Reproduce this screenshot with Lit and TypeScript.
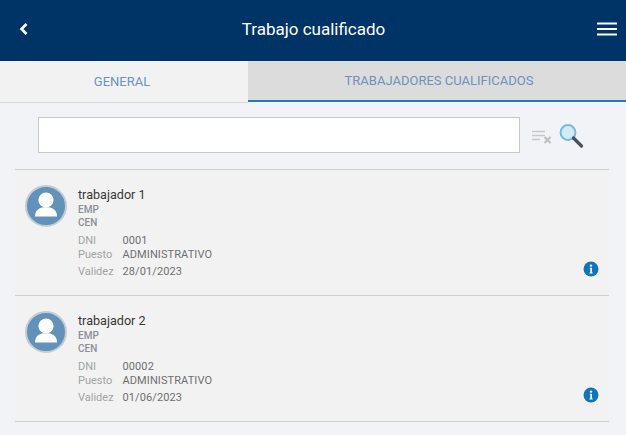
import { LitElement, html, css, svg } from "lit";
import { customElement } from "lit/decorators.js";

const workers = [
  { name: "trabajador 1", dni: "0001", puesto: "ADMINISTRATIVO", validez: "28/01/2023" },
  { name: "trabajador 2", dni: "00002", puesto: "ADMINISTRATIVO", validez: "01/06/2023" },
];

@customElement("app-root")
export class AppRoot extends LitElement {
  static styles = css`
    :host { display: block; height: 435px; overflow: hidden; background: #f1f3f7; font-family: Roboto, "Liberation Sans", sans-serif; }
    .top { height: 61px; background: #003366; display: flex; align-items: center; justify-content: space-between; padding: 0 9px 3px 18px; box-sizing: border-box; color: #fff; }
    .top h1 { margin: 0; font-size: 17px; font-weight: 400; color: #fff; }
    .top svg { display: block; }
    .tabs { display: flex; height: 42px; box-sizing: border-box; }
    .tab { display: flex; align-items: center; justify-content: center; font-size: 13px; color: #6d93b8; box-sizing: border-box; padding-bottom: 1px; }
    .tab.a { width: 248px; background: #f2f2f2; border-bottom: 1px solid #d8d8d8; padding-right: 4px; }
    .tab.b { flex: 1; background: #dcdcdc; border-bottom: 2px solid #2478c0; height: 41px; padding: 0 0 0 4px; }
    .search { display: flex; align-items: flex-start; padding: 14px 0 0 38px; height: 66px; box-sizing: border-box; }
    .input { width: 482px; height: 36px; box-sizing: border-box; border: 1px solid #c9c9c9; background: #fff; }
    .clear { margin: 13px 0 0 12px; }
    .lens { margin: 6px 0 0 5px; }
    .list { margin: 0 17px 0 15px; }
    .card { height: 126px; box-sizing: border-box; border-top: 1px solid #cfcfcf; background: #f2f2f2; display: flex; padding: 15px 10px 0 10px; }
    .card.end { height: 1px; padding: 0; }
    .avatar { width: 42px; height: 42px; flex: none; box-sizing: border-box; border: 2px solid #c3ccd4; border-radius: 50%; background: #6292b9; overflow: hidden; }
    .info { margin-left: 11px; flex: 1; }
    .name { font-size: 12.600px; line-height: 18px; color: #383838; margin-top: 1px; }
    .org { font-size: 10px; font-weight: 500; line-height: 13px; color: #8b9096; }
    .org.first { margin-top: -1px; }
    .rows { margin-top: 5px; display: grid; grid-template-columns: 44.500px 1fr; font-size: 11px; color: #a3a3a3; }
    .rows div { line-height: 14px; white-space: nowrap; }
    .rows .v { color: #6f6f6f; letter-spacing: 0.1px; }
    .rows .gap { margin-top: 3px; }
    .i { align-self: flex-start; margin-top: 76px; }
  `;

  private infoIcon() {
    return html`<svg class="i" width="16" height="16" viewBox="0 0 16 16">
      <circle cx="8" cy="8" r="7.500" fill="#1273b9"></circle>
      <circle cx="8" cy="4.600" r="1.200" fill="#fff"></circle>
      <path d="M6.800 6.800h2.200v4.600h0.700v1H6.500v-1h0.800V7.800h-0.500z" fill="#fff"></path>
    </svg>`;
  }

  private avatar() {
    return html`<div class="avatar"><svg width="38" height="38" viewBox="0 0 38 38">
      ${svg`<circle cx="19" cy="13" r="7.600" fill="#fff"></circle>
      <path d="M8 29.500c0-3 .8-5.500 3-7 2-1.300 3.500-1.800 5-2.200h6c1.500.4 3 .9 5 2.200 2.200 1.500 3 4 3 7z" fill="#fff"></path>`}
    </svg></div>`;
  }

  render() {
    return html`
      <div class="top">
        <svg width="12" height="14" viewBox="0 0 12 14"><path d="M8.500 2L3.500 7l5 5" fill="none" stroke="#fff" stroke-width="2.600"></path></svg>
        <h1>Trabajo cualificado</h1>
        <svg width="20" height="14" viewBox="0 0 20 14"><path d="M0 1.500h20M0 7h20M0 12.500h20" stroke="#fff" stroke-width="2"></path></svg>
      </div>
      <div class="tabs">
        <div class="tab a">GENERAL</div>
        <div class="tab b">TRABAJADORES CUALIFICADOS</div>
      </div>
      <div class="search">
        <div class="input"></div>
        <svg class="clear" width="21" height="14" viewBox="0 0 21 14">
          <path d="M0 1.500h13M0 5.500h13M0 9.500h8" stroke="#c8c8c8" stroke-width="1.700"></path>
          <path d="M12.500 7l6 6M18.500 7l-6 6" stroke="#bdbdbd" stroke-width="2"></path>
        </svg>
        <svg class="lens" width="26" height="26" viewBox="0 0 26 26">
          <circle cx="10" cy="9.500" r="7.400" fill="#d6e9f6" stroke="#6fbde0" stroke-width="2"></circle>
          <path d="M15.500 15l8 8" stroke="#4a5058" stroke-width="3.200" stroke-linecap="round"></path>
        </svg>
      </div>
      <div class="list">
        ${workers.map((w) => html`
          <div class="card">
            ${this.avatar()}
            <div class="info">
              <div class="name">${w.name}</div>
              <div class="org first">EMP</div>
              <div class="org">CEN</div>
              <div class="rows">
                <div>DNI</div><div class="v">${w.dni}</div>
                <div>Puesto</div><div class="v">${w.puesto}</div>
                <div class="gap">Validez</div><div class="v gap">${w.validez}</div>
              </div>
            </div>
            ${this.infoIcon()}
          </div>`)}
        <div class="card end"></div>
      </div>
    `;
  }
}
